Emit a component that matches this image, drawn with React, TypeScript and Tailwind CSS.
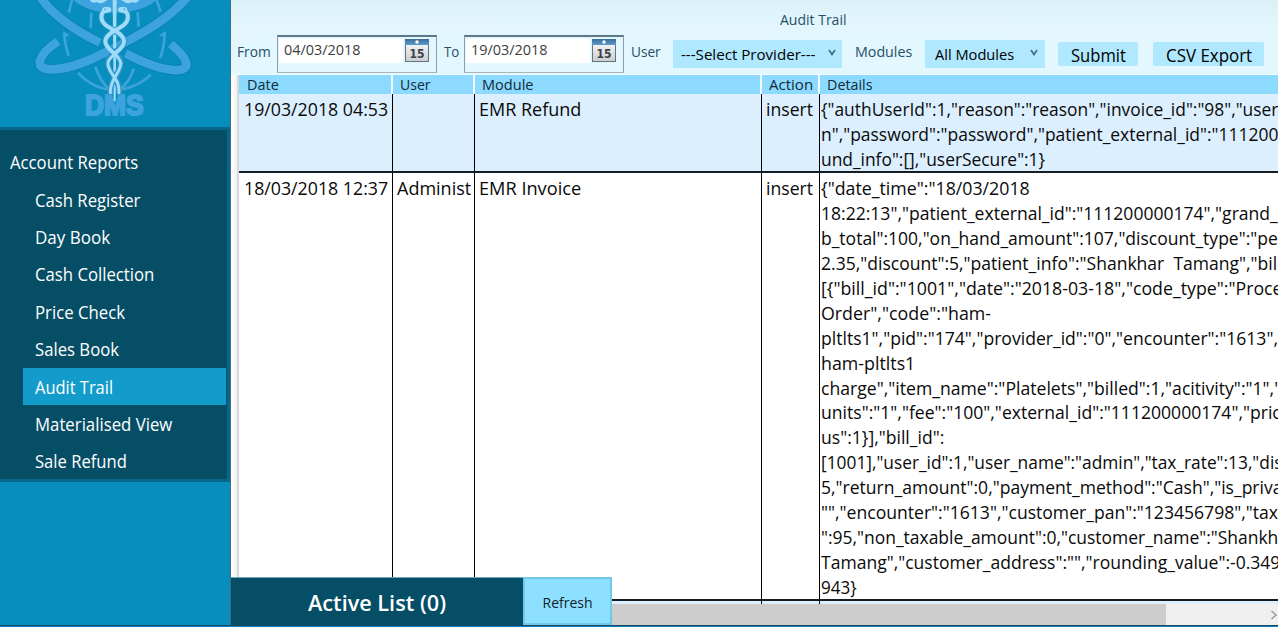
import { useLayoutEffect, useRef, useState } from "react";

type FitProps = { text: string; w: number; className?: string };

/** One line of text, scaled horizontally to a known advance width. */
function Fit({ text, w, className = "" }: FitProps) {
  const ref = useRef<HTMLSpanElement>(null);
  const [scale, setScale] = useState(1);
  useLayoutEffect(() => {
    if (ref.current) setScale(w / ref.current.offsetWidth);
  }, [w, text]);
  return (
    <span className={"inline-block shrink-0 whitespace-pre " + className} style={{ width: w }}>
      <span ref={ref} className="inline-block origin-left" style={{ transform: `scaleX(${scale})` }}>
        {text}
      </span>
    </span>
  );
}

function Logo() {
  return (
    <svg viewBox="0 0 693 384" className="block h-[128px] w-[231px]" fill="none">
      <g stroke="#0879a8" strokeWidth="31" opacity=".55">
        <path d="M174 124C110 166 104 206 148 208C200 210 250 190 300 165C380 125 490 75 562 -8" />
        <path d="M512 132C570 180 576 214 520 210C470 207 420 182 377 160M300 128C240 100 160 50 122 -8" />
      </g>
      <path d="M214 -8C240 25 292 39 343 39C400 39 450 22 478 -8Z" fill="#3da3de" />
      <g stroke="#3da3de" strokeWidth="8">
        <path d="M216 0L206 38M274 38L272 84M413 36L416 80M470 0L482 36M192 98Q196 140 206 168M494 96Q494 140 480 174" />
        <path d="M234 218Q280 268 343 271Q410 266 452 224M286 200Q300 245 330 270M401 206Q390 245 358 270" />
      </g>
      <path d="M190 94L210 106L194 112ZM497 94L476 106L494 112Z" fill="#3da3de" />
      <g stroke="#3da3de" strokeWidth="26">
        <path d="M512 132C570 180 576 214 520 210C470 207 420 182 377 160M300 128C240 100 160 50 122 -8" />
        <path d="M174 124C110 166 104 206 148 208C200 210 250 190 300 165C380 125 490 75 562 -8" />
      </g>
      <path d="M268 -4Q274 14 290 6Q304 14 316 4L330 -4ZM420 -4Q412 14 396 6Q382 14 370 4L356 -4Z" fill="#9edcf8" />
      <text x="343" y="344" textAnchor="middle" fontFamily="Liberation Sans" fontWeight="700" fontSize="88" textLength="176" lengthAdjust="spacingAndGlyphs" fill="#3da3de" stroke="#3da3de" strokeWidth="6">
        DMS
      </text>
      <path d="M338 -4H350L347 304H341Z" fill="#9edcf8" />
      <g strokeLinecap="round">
        <g stroke="#2d93cc" strokeWidth="17">
          <path d="M324 31C300 32 298 60 318 76C340 92 372 102 372 124C372 150 318 160 324 194C328 224 360 236 357 278" />
          <path d="M364 31C388 32 390 60 370 76C348 92 316 102 316 124C316 150 368 160 362 194C358 224 330 236 331 278" />
        </g>
        <g stroke="#9edcf8">
          <path strokeWidth="12" d="M364 31C388 32 390 60 370 76C348 92 316 102 316 124C316 144 336 152 346 164" />
          <path strokeWidth="12" d="M324 31C300 32 298 60 318 76C340 92 372 102 372 124C372 144 352 152 342 164" />
          <path strokeWidth="9" d="M342 164C326 178 322 186 324 194C328 224 360 236 357 278" />
          <path strokeWidth="9" d="M346 164C360 178 364 186 362 194C358 224 330 236 331 278" />
        </g>
      </g>
      <ellipse cx="320" cy="29" rx="14" ry="9" fill="#9edcf8" />
      <ellipse cx="368" cy="29" rx="14" ry="9" fill="#9edcf8" />
      <circle cx="315" cy="28" r="2.500" fill="#3da3de" />
      <circle cx="373" cy="28" r="2.500" fill="#3da3de" />
    </svg>
  );
}

function CalendarIcon() {
  return (
    <svg viewBox="0 0 24 23" className="h-[23px] w-6 shrink-0">
      <defs>
        <linearGradient id="page" x1="0" y1="0" x2="0" y2="1">
          <stop offset="0" stopColor="#fff" />
          <stop offset="1" stopColor="#c9cdd1" />
        </linearGradient>
        <linearGradient id="binding" x1="0" y1="0" x2="0" y2="1">
          <stop offset="0" stopColor="#3a6d98" />
          <stop offset="1" stopColor="#5e9bca" />
        </linearGradient>
      </defs>
      <rect x=".5" y=".5" width="23" height="22" fill="url(#page)" stroke="#65717b" />
      <rect x="0" y="0" width="24" height="6" fill="url(#binding)" />
      <circle cx="12" cy="3" r="1.700" fill="#fff" />
      <text x="12" y="19" textAnchor="middle" fontFamily="DejaVu Sans" fontWeight="700" fontSize="11.500" textLength="15" lengthAdjust="spacingAndGlyphs" fill="#3c4247">
        15
      </text>
    </svg>
  );
}

function DateBox({ value, className = "" }: { value: string; className?: string }) {
  return (
    <div className={"flex h-[38px] w-40 shrink-0 items-start border-x border-t-2 border-b border-t-[#5f7889] border-r-[#8b9daa] border-b-[#a5b4bd] border-l-[#8b9daa] pt-[2px] pl-px " + className}>
      <div className="h-6 w-[124px] bg-white pl-[5px] text-[15px] leading-[20px] text-[#3d3d3d]">
        <Fit text={value} w={77} />
      </div>
      <div className="ml-[2px]">
        <CalendarIcon />
      </div>
    </div>
  );
}

function Chevron() {
  return (
    <svg viewBox="0 0 8 7" className="mb-[3px] h-[7px] w-2 shrink-0" fill="none" stroke="#3f6a7e" strokeWidth="1.600">
      <path d="M1 1L4 5.500L7 1" />
    </svg>
  );
}

const menu = [
  { label: "Cash Register", w: 105 },
  { label: "Day Book", w: 75 },
  { label: "Cash Collection", w: 119.5 },
  { label: "Price Check", w: 90 },
  { label: "Sales Book", w: 84 },
  { label: "Audit Trail", w: 78, active: true },
  { label: "Materialised View", w: 137 },
  { label: "Sale Refund", w: 92 },
];

const refundDetails = [
  { text: '{"authUserId":1,"reason":"reason","invoice_id":"98","user', w: 457 },
  { text: 'n","password":"password","patient_external_id":"111200', w: 457 },
  { text: 'und_info":[],"userSecure":1}', w: 224 },
];

const invoiceDetails = [
  { text: '{"date_time":"18/03/2018', w: 209 },
  { text: '18:22:13","patient_external_id":"111200000174","grand_', w: 457 },
  { text: 'b_total":100,"on_hand_amount":107,"discount_type":"pe', w: 457 },
  { text: '2.35,"discount":5,"patient_info":"Shankhar  Tamang","bil', w: 456 },
  { text: '[{"bill_id":"1001","date":"2018-03-18","code_type":"Proce', w: 462 },
  { text: 'Order","code":"ham-', w: 170 },
  { text: 'pltlts1","pid":"174","provider_id":"0","encounter":"1613",', w: 457 },
  { text: "ham-pltlts1", w: 94 },
  { text: 'charge","item_name":"Platelets","billed":1,"acitivity":"1","', w: 460 },
  { text: 'units":"1","fee":"100","external_id":"111200000174","pric', w: 460 },
  { text: 'us":1}],"bill_id":', w: 123 },
  { text: '[1001],"user_id":1,"user_name":"admin","tax_rate":13,"dis', w: 462 },
  { text: '5,"return_amount":0,"payment_method":"Cash","is_priva', w: 461 },
  { text: '"","encounter":"1613","customer_pan":"123456798","tax', w: 457 },
  { text: '":95,"non_taxable_amount":0,"customer_name":"Shankh', w: 457 },
  { text: 'Tamang","customer_address":"","rounding_value":-0.349', w: 459 },
  { text: "943}", w: 36 },
];

const columns = "grid grid-cols-[154px_82px_287px_58px_458px]";

const headers = [
  { label: "Date", w: 32, className: "border-r-2 pl-2" },
  { label: "User", w: 30, className: "border-r-2 pl-[7px]" },
  { label: "Module", w: 52, className: "border-r-2 pl-[7px]" },
  { label: "Action", w: 44, className: "border-r-2 pl-[7px]" },
  { label: "Details", w: 46, className: "pl-[7px]" },
];

type RowProps = {
  cells: { text: string; w: number }[];
  details: { text: string; w: number }[];
  className: string;
};

function Row({ cells, details, className }: RowProps) {
  return (
    <div className={columns + " border-b-2 border-[#151c22] text-[18px] leading-[25px] text-[#0a0a0a] " + className}>
      {cells.map((cell, i) => (
        <div key={i} className="overflow-hidden border-r border-black pt-[3px] pl-1 first:pl-[5px]">
          {cell.text && <Fit text={cell.text} w={cell.w} />}
        </div>
      ))}
      <div className="flex flex-col overflow-hidden pt-[3px] pl-px">
        {details.map((line) => (
          <Fit key={line.text} text={line.text} w={line.w} className="h-[24.940px]" />
        ))}
      </div>
    </div>
  );
}

export default function App() {
  return (
    <div className="flex h-[627px] w-[1278px] flex-col overflow-hidden bg-white font-['Open_Sans','Noto_Sans',sans-serif]">
      <div className="flex h-[625px] min-h-0">
        <aside className="w-[231px] shrink-0 border-r border-[#3c6f86] bg-[#078ebd]">
          <div className="h-[127px] overflow-hidden">
            <Logo />
          </div>
          <nav className="h-[355px] border-y-[3px] border-r-[3px] border-[#05688b] bg-[#054e66] pt-[13px] text-[17.500px] text-white">
            <div className="flex h-[38px] items-center pl-[10px]">
              <Fit text="Account Reports" w={128} />
            </div>
            {menu.map((item) => (
              <div
                key={item.label}
                className={"mr-[1px] ml-[23px] flex h-[37.400px] items-center pl-[12px] " + (item.active ? "bg-[#139bcc]" : "")}
              >
                <Fit text={item.label} w={item.w} />
              </div>
            ))}
          </nav>
        </aside>

        <main className="relative flex min-w-0 flex-1 flex-col">
          <header className="h-[74px] bg-linear-to-b from-[#daf0f7] via-[#e3f6fd] via-30% to-[#e3f7ff] text-[15px] text-[#245068]">
            <div className="flex h-[35px] items-center pt-1 pl-[549px] text-[14px]">
              <Fit text="Audit Trail" w={66} />
            </div>
            <div className="flex h-[39px] items-start pl-[6px]">
              <Fit text="From" w={34} className="mt-[5px]" />
              <DateBox value="04/03/2018" className="ml-[6px]" />
              <Fit text="To" w={15} className="mt-[5px] ml-[7px]" />
              <DateBox value="19/03/2018" className="ml-[5px]" />
              <Fit text="User" w={30} className="mt-[5px] ml-[7px]" />
              <div className="mt-[5px] ml-3 flex h-7 w-[169px] shrink-0 items-center justify-between bg-[#b0e8ff] pr-[6px] pl-2 text-black">
                <Fit text="---Select Provider---" w={134} />
                <Chevron />
              </div>
              <Fit text="Modules" w={57} className="mt-[5px] ml-[13px]" />
              <div className="mt-[5px] ml-[13px] flex h-7 w-[120px] shrink-0 items-center justify-between bg-[#b0e8ff] pr-[7px] pl-[10px] text-black">
                <Fit text="All Modules" w={79} />
                <Chevron />
              </div>
              <button className="mt-[7px] ml-[13px] flex h-6 w-20 shrink-0 items-center justify-center rounded-[2px] bg-[#b0e8ff] pt-px text-[17.500px] leading-6 text-black">
                <Fit text="Submit" w={55} />
              </button>
              <button className="mt-[7px] ml-[15px] flex h-6 w-[111px] shrink-0 items-center justify-center rounded-[2px] bg-[#b0e8ff] pt-px text-[17.500px] leading-6 text-black">
                <Fit text="CSV Export" w={86} />
              </button>
            </div>
          </header>

          <section className="flex h-[530px] overflow-hidden border-t border-[#f2fbff]">
            <div className="w-2 shrink-0 border-r-2 border-[#d5d9dc] bg-linear-to-r from-white to-[#f1f1f1]" />
            <div className="min-w-0 flex-1">
              <div className={columns + " h-[19px] text-[14px] leading-[20px] text-[#102a38]"}>
                {headers.map((h) => (
                  <div key={h.label} className={"h-[19px] border-[#f2fbff] bg-[#8cdaff] " + h.className}>
                    <Fit text={h.label} w={h.w} />
                  </div>
                ))}
              </div>
              <Row
                className="h-[79px] bg-[#dcefff]"
                cells={[
                  { text: "19/03/2018 04:53", w: 144 },
                  { text: "", w: 0 },
                  { text: "EMR Refund", w: 102 },
                  { text: "insert", w: 47 },
                ]}
                details={refundDetails}
              />
              <Row
                className="h-[428px] bg-white"
                cells={[
                  { text: "18/03/2018 12:37", w: 144 },
                  { text: "Administ", w: 74 },
                  { text: "EMR Invoice", w: 102 },
                  { text: "insert", w: 47 },
                ]}
                details={invoiceDetails}
              />
              <div className={columns + " h-[3px] bg-[#dcefff]"}>
                {headers.slice(0, 4).map((h) => (
                  <div key={h.label} className="border-r border-black" />
                ))}
              </div>
            </div>
          </section>

          <div className="flex h-[21px] bg-[#f0f0f0]">
            <div className="w-[935px] bg-[#cdcdcd]" />
            <div className="flex flex-1 items-center justify-end">
              <svg viewBox="0 0 8 10" className="h-[10px] w-2" fill="none" stroke="#9b9b9b" strokeWidth="1.500">
                <path d="M1.500 1L6 5L1.500 9" />
              </svg>
            </div>
          </div>

          <div className="absolute bottom-0 left-0 flex h-12 w-[381px]">
            <div className="flex w-[292px] items-center justify-center border-t border-[#6ca9bd] bg-[#054e66] pt-[3px] text-[21.500px] font-semibold text-white">
              <Fit text="Active List (0)" w={138} />
            </div>
            <button className="flex flex-1 items-center justify-center border-2 border-[#72c8ea] bg-[#8de0ff] pt-[2px] text-[14px] text-[#14222b]">
              <Fit text="Refresh" w={50} />
            </button>
          </div>
        </main>
      </div>
      <div className="h-[2px] border-t border-[#174969] bg-[#1680bf]" />
    </div>
  );
}
